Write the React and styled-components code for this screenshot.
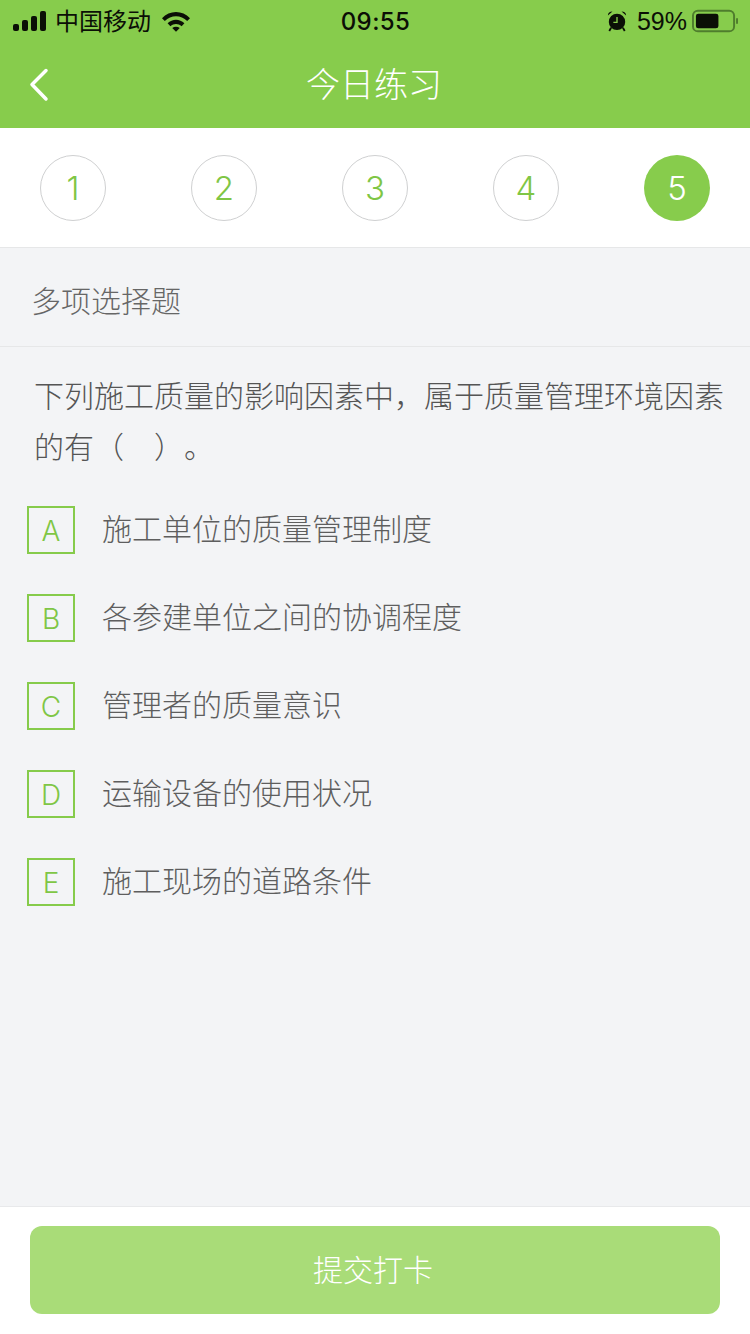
import React from "react";
import styled, { createGlobalStyle } from "styled-components";

const Global = createGlobalStyle`
  html, body { margin: 0; padding: 0; background: #f3f4f6; }
  * { box-sizing: border-box; }
  body { font-family: "Noto Sans CJK SC", "Noto Sans", sans-serif; }
`;

const Page = styled.div`
  width: 750px;
  height: 1334px;
  display: flex;
  flex-direction: column;
  background: #f3f4f6;
  overflow: hidden;
`;
const Header = styled.header`
  height: 128px;
  background: #87cc4c;
  display: flex;
  flex-direction: column;
`;
const StatusBar = styled.div`
  height: 40px;
  display: grid;
  grid-template-columns: 1fr auto 1fr;
  align-items: center;
  padding: 0 12px 0 13px;
  color: #0b0f06;
`;
const StatusLeft = styled.div`
  display: flex;
  align-items: center;
`;
const StatusRight = styled.div`
  display: flex;
  align-items: center;
  justify-content: flex-end;
`;
const Carrier = styled.span`
  font-size: 24px;
  font-weight: 400;
  line-height: 40px;
  margin-left: 8px;
  margin-right: 11px;
  padding-bottom: 2px;
`;
const Time = styled.span`
  font-family: "Inter", "Liberation Sans", sans-serif;
  font-size: 24px;
  font-weight: 500;
  letter-spacing: 0.4px;
`;
const Percent = styled.span`
  font-family: "Liberation Sans", sans-serif;
  font-size: 25px;
  margin: 0 5px 0 10px;
`;
const Nav = styled.nav`
  height: 88px;
  position: relative;
  display: flex;
  align-items: center;
  justify-content: center;
`;
const Back = styled.svg`
  position: absolute;
  left: 29px;
  top: 28px;
`;
const Title = styled.h1`
  margin: 0 2px 3px 0;
  color: #fff;
  font-size: 34px;
  font-weight: 300;
  line-height: 44px;
`;
const Steps = styled.div`
  height: 120px;
  background: #fff;
  border-bottom: 1px solid #e6e7e8;
  padding: 1px 40px 0;
  display: flex;
  align-items: center;
  justify-content: space-between;
`;
const Step = styled.div`
  width: 66px;
  height: 66px;
  border-radius: 50%;
  display: flex;
  align-items: center;
  justify-content: center;
  font-family: "Inter", "Liberation Sans", sans-serif;
  font-size: 33px;
  font-weight: 300;
  color: ${p => (p.$active ? "#fff" : "#7fc645")};
  background: ${p => (p.$active ? "#87cc4c" : "#fff")};
  border: ${p => (p.$active ? "none" : "1px solid #cfd0d1")};
`;
const TypeRow = styled.div`
  height: 99px;
  border-bottom: 1px solid #e6e7e8;
  padding: 4px 31px 0;
  display: flex;
  align-items: center;
  font-size: 30px;
  font-weight: 300;
  color: #666;
`;
const Body = styled.main`
  flex: 1;
  padding: 22px 20px 0 27px;
`;
const Question = styled.p`
  margin: 0 0 35px;
  padding-left: 7px;
  font-size: 30px;
  font-weight: 300;
  line-height: 51px;
  color: #555;
  text-spacing-trim: space-all;
`;
const Options = styled.ul`
  list-style: none;
  margin: 0;
  padding: 0;
  display: flex;
  flex-direction: column;
  gap: 40px;
`;
const Option = styled.li`
  display: flex;
  align-items: center;
  gap: 27px;
  height: 48px;
`;
const Letter = styled.span`
  width: 48px;
  height: 48px;
  border: 2px solid #86cb4b;
  display: flex;
  align-items: center;
  justify-content: center;
  font-family: "Inter", "Liberation Sans", sans-serif;
  font-size: 28px;
  font-weight: 300;
  color: #7fc645;
  padding-top: 2px;
`;
const OptionText = styled.span`
  font-size: 30px;
  font-weight: 300;
  color: #5e5e5e;
  margin-bottom: 6px;
`;
const Footer = styled.footer`
  height: 128px;
  background: #fff;
  border-top: 1px solid #e8e9eb;
  padding: 19px 30px 0;
`;
const Submit = styled.button`
  width: 690px;
  height: 88px;
  border: none;
  border-radius: 12px;
  background: #a9dc78;
  color: #fff;
  font-family: inherit;
  font-size: 30px;
  font-weight: 300;
  padding: 0 4px 4px 0;
`;

const Signal = () => (
  <svg width="34" height="20" viewBox="0 0 34 20" fill="#0b0f06">
    <rect x="0" y="13" width="6" height="7" rx="2" />
    <rect x="9" y="9" width="6" height="11" rx="2" />
    <rect x="18" y="5" width="6" height="15" rx="2" />
    <rect x="27" y="0" width="6" height="20" rx="2" />
  </svg>
);
const Wifi = () => (
  <svg width="28" height="21" viewBox="0 0 30 22" fill="#0b0f06">
    <path d="M0 7.500C8-1.500 22-1.500 30 7.500L27 10.500C20.500 3.500 9.500 3.500 3 10.500Z" />
    <path d="M6 13C11 8 19 8 24 13L21 16C17.500 12.800 12.500 12.800 9 16Z" />
    <path d="M11 18C13.500 16 16.500 16 19 18L15 22Z" />
  </svg>
);
const Alarm = () => (
  <svg width="20" height="22" viewBox="0 0 22 24">
    <circle cx="11" cy="13" r="9" fill="#0b0f06" />
    <path d="M11 7.500V13.500H7" fill="none" stroke="#87cc4c" strokeWidth="1.500" />
    <path d="M1 6C1 3 3 1.500 6 1.500ZM21 6C21 3 19 1.500 16 1.500Z" fill="#0b0f06" />
    <path d="M4.500 19.500L2.500 23M17.500 19.500L19.500 23" stroke="#0b0f06" strokeWidth="2" />
  </svg>
);
const Battery = () => (
  <svg width="46" height="24" viewBox="0 0 47 24">
    <rect x="1" y="1.500" width="42" height="21" rx="5" fill="none" stroke="#4f7d2d" strokeWidth="2" />
    <rect x="4" y="4.500" width="23" height="15" rx="2.500" fill="#0b0f06" />
    <rect x="45" y="9" width="2" height="6" rx="1" fill="#4f7d2d" />
  </svg>
);

const options = [
  ["A", "施工单位的质量管理制度"],
  ["B", "各参建单位之间的协调程度"],
  ["C", "管理者的质量意识"],
  ["D", "运输设备的使用状况"],
  ["E", "施工现场的道路条件"],
];

export default function App() {
  return (
    <Page>
      <Global />
      <Header>
        <StatusBar>
          <StatusLeft>
            <Signal />
            <Carrier>中国移动</Carrier>
            <Wifi />
          </StatusLeft>
          <Time>09:55</Time>
          <StatusRight>
            <Alarm />
            <Percent>59%</Percent>
            <Battery />
          </StatusRight>
        </StatusBar>
        <Nav>
          <Back width="20" height="34" viewBox="0 0 20 34" fill="none">
            <path d="M17 2.500L3 16.500L17 31" stroke="#fff" strokeWidth="3.500" strokeLinecap="round" strokeLinejoin="round" />
          </Back>
          <Title>今日练习</Title>
        </Nav>
      </Header>
      <Steps>
        {[1, 2, 3, 4, 5].map(n => (
          <Step key={n} $active={n === 5}>{n}</Step>
        ))}
      </Steps>
      <TypeRow>多项选择题</TypeRow>
      <Body>
        <Question>下列施工质量的影响因素中，属于质量管理环境因素的有（　）。</Question>
        <Options>
          {options.map(([l, t]) => (
            <Option key={l}>
              <Letter>{l}</Letter>
              <OptionText>{t}</OptionText>
            </Option>
          ))}
        </Options>
      </Body>
      <Footer>
        <Submit>提交打卡</Submit>
      </Footer>
    </Page>
  );
}
